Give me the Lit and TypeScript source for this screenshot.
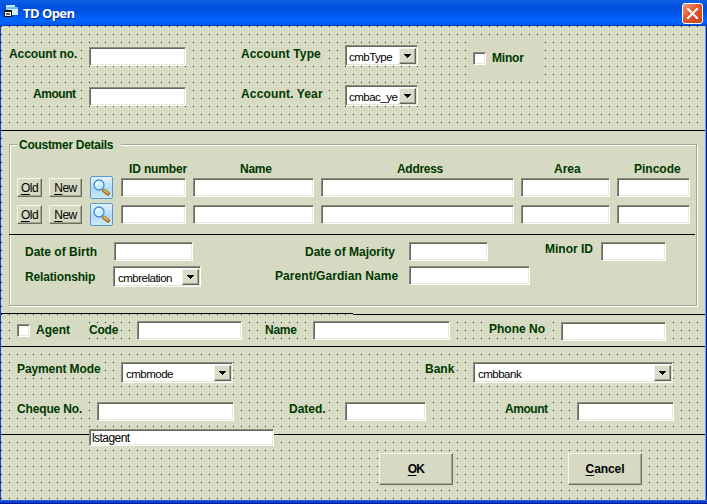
import { LitElement, html, svg, css } from "lit";
import { customElement, property } from "lit/decorators.js";

@customElement("combo-box")
class ComboBox extends LitElement {
  @property() value = "";
  static styles = css`
    :host { display: flex; flex: none; box-sizing: border-box; height: 20px; background: #fff;
      border: 1px solid; border-color: #8b8d7d #fff #fff #8b8d7d;
      box-shadow: inset 1px 1px #66675c, inset -1px -1px #dfe3d0; padding: 2px 1px 1px 4px; }
    .value { flex: 1; min-width: 0; white-space: nowrap; color: #000;
      font: 11.5px/18px "Liberation Sans", Arial, sans-serif; letter-spacing: -0.5px; }
    .drop { flex: none; width: 17px; box-sizing: border-box; background: #d9dcc8; border: 1px solid;
      border-color: #f1f3e6 #66675c #66675c #f1f3e6; box-shadow: inset -1px -1px #a2a491;
      display: flex; align-items: center; justify-content: center; }
    svg { display: block; }
  `;
  render() {
    return html`<span class="value">${this.value}</span>
      <span class="drop"><svg width="7" height="4" viewBox="0 0 7 4" shape-rendering="crispEdges"><path d="M0 0h7v1h-1v1h-1v1h-1v1h-1v-1h-1v-1h-1v-1h-1z"/></svg></span>`;
  }
}

@customElement("app-root")
class AppRoot extends LitElement {
  static styles = css`
    :host { display: block; width: 707px; height: 504px; overflow: hidden;
      font: bold 12px/15px "Liberation Sans", Arial, sans-serif; color: #003800; }
    * { box-sizing: border-box; }
    .window { display: flex; flex-direction: column; width: 707px; height: 504px; background: #0a3fd0; }
    .title { flex: none; height: 26px; display: flex; align-items: center; padding: 0 4px 0 4px;
      background: linear-gradient(#0a5fe8 0, #0b5ce2 2px, #0051de 5px, #0052e4 12px, #0061fb 18px, #0067ff 22px, #0058e8 24px, #0040bd 26px); }
    .title-text { flex: 1; margin-left: 4px; color: #fff; font: 700 13px/18px "Open Sans", "Noto Sans", sans-serif;
      letter-spacing: -0.55px; text-shadow: 1px 1px #0a2f8f; }
    .close { width: 21px; height: 21px; border: 1px solid #fff; border-radius: 3px; display: flex; align-items: center; justify-content: center;
      background: linear-gradient(135deg, #f09a80, #e2572f 45%, #c8401c); }
    svg { display: block; }
    .client { position: relative; flex: none; width: 704px; height: 474px; margin-left: 1px; display: flex; flex-direction: column;
      background: conic-gradient(from 270deg at 1px 1px, #1d1e18 90deg, transparent 0) 0 0 / 8px 8px,
        repeating-conic-gradient(#d3d8bf 0 25%, #dbe0ca 0 50%) 0 0 / 4px 4px; }
    .frame { flex: none; display: flex; height: 474px; }
    .right { width: 2px; background: linear-gradient(90deg, #6f9bea 1px, #001e9c 1px); }
    .bottom { height: 4px; background: linear-gradient(#2e5fd6 1px, #0a3fd8 1px 3px, #00189a 3px); }

    .section { flex: none; border-bottom: 1px solid #000; }
    .account { height: 105px; padding-top: 10px; display: flex; align-items: flex-start; }
    .account-grid { display: flex; flex-direction: column; padding-top: 9px; }
    .agent-section { height: 32px; padding-top: 6px; }
    .payment { height: 88px; padding-top: 15px; }
    .actions { height: 65px; padding-top: 18px; }
    .row { display: flex; align-items: flex-start; }
    .r40 { height: 40px; }

    .label { flex: none; height: 14px; white-space: nowrap; background: #d6dac3; }
    .field { flex: none; height: 19px; background: #fff; border: 1px solid; border-color: #8b8d7d #fff #fff #8b8d7d;
      box-shadow: inset 1px 1px #66675c, inset -1px -1px #e9ecdd; }
    .box { flex: none; width: 13px; height: 13px; background: #fff; border: 1px solid; border-color: #8b8d7d #fff #fff #8b8d7d;
      box-shadow: inset 1px 1px #66675c, inset -1px -1px #e9ecdd; }
    .btn { flex: none; height: 19px; border: 1px solid; border-color: #f6f8ec #6d6f60 #6d6f60 #f6f8ec; box-shadow: inset -1px -1px #a5a893;
      background: #d6dac3; color: #000; font: 12px/18px "Liberation Sans", Arial, sans-serif; letter-spacing: -0.5px; text-align: center; padding: 0; }
    u { text-decoration: underline; text-underline-offset: 2px; text-decoration-thickness: 1px; }

    .lbl-acc { width: 71px; margin-left: 8px; margin-top: 2px; letter-spacing: -0.1px; }
    .lbl-amt { width: 46px; margin-left: 32px; margin-top: 2px; letter-spacing: -0.45px; }
    .acc-no { width: 97px; margin-left: 9px; margin-top: 2px; }
    .amt { width: 97px; margin-left: 10px; margin-top: 2px; }
    .lbl-type { width: 82px; margin-left: 55px; margin-top: 2px; letter-spacing: 0.12px; }
    .lbl-year { width: 84px; margin-left: 55px; margin-top: 2px; letter-spacing: 0.15px; }
    .cmb-type { width: 73px; margin-left: 22px; height: 21px; }
    .cmb-year { width: 73px; margin-left: 20px; height: 21px; }
    .cmb-type, .cmb-year { padding-left: 3px; }
    .minor { width: 79px; height: 46px; margin-left: 48px; padding: 15px 0 0 7px; display: flex; background: #d6dac3; letter-spacing: -0.2px; }
    .minor .box { margin-top: 1px; margin-right: 6px; }

    .customer { flex: none; height: 182px; margin-left: 2px; padding: 13px 8px 6px 6px; background: #d6dac3; }
    .group { height: 162px; position: relative; border: 1px solid #a3a692; box-shadow: 1px 1px #fff, inset 1px 1px #fff; padding: 17px 0 0 0; }
    .legend { position: absolute; left: 7px; top: -7px; width: 104px; height: 14px; padding-left: 2px; background: #d6dac3; letter-spacing: -0.28px; white-space: nowrap; }
    .heads { height: 15px; }
    .h-id { width: 60px; margin-left: 119px; letter-spacing: -0.15px; }
    .h-name { width: 40px; margin-left: 51px; letter-spacing: -0.25px; }
    .h-addr { width: 50px; margin-left: 117px; letter-spacing: -0.3px; }
    .h-area { width: 30px; margin-left: 107px; }
    .h-pin { width: 52px; margin-left: 50px; }
    .cust-row { height: 27px; padding-left: 7px; }
    .old { width: 25px; margin-top: 1px; }
    .new { width: 33px; margin-left: 7px; margin-top: 1px; }
    .find { flex: none; width: 23px; height: 23px; margin: -1px 8px 0 8px; border: 1px solid #5f97cf; border-radius: 2px;
      background: linear-gradient(#e2f2fd, #b4daf6 55%, #c9e8fb); }
    .cust-row .field { margin-top: 1px; margin-right: 7px; }
    .c-id { width: 65px; }
    .c-name { width: 121px; }
    .c-addr { width: 193px; }
    .c-area { width: 89px; }
    .c-pin { width: 73px; }
    .divider { height: 1px; width: 686px; margin: 3px 0 7px -1px; background: #000; }
    .dates { height: 24px; }
    .l-dob { width: 76px; margin-left: 15px; margin-top: 3px; }
    .f-dob { width: 79px; margin-left: 13px; }
    .l-maj { width: 95px; margin-left: 112px; margin-top: 3px; }
    .f-maj { width: 79px; margin-left: 9px; }
    .l-mid { width: 50px; margin-left: 57px; }
    .f-mid { width: 65px; margin-left: 6px; }
    .l-rel { width: 76px; margin-left: 15px; margin-top: 4px; letter-spacing: -0.15px; }
    .cmb-rel { width: 88px; margin-left: 12px; height: 21px; }
    .l-par { width: 125px; margin-left: 74px; margin-top: 3px; letter-spacing: 0.06px; }
    .f-par { width: 121px; margin-left: 9px; }

    .split { flex: none; height: 2px; display: flex; }
    .split-a { width: 352px; border-top: 1px solid #000; }
    .split-b { flex: 1; background: #d6dac3; border-bottom: 1px solid #000; }

    .agent { display: flex; width: 72px; height: 19px; margin-left: 15px; padding: 3px 0 0 1px; background: #d6dac3; }
    .agent .label { margin: -1px 0 0 6px; }
    .l-code { width: 31px; margin-left: 1px; margin-top: 2px; letter-spacing: -0.2px; }
    .f-code { width: 105px; margin-left: 17px; }
    .l-name { width: 36px; margin-left: 23px; margin-top: 2px; letter-spacing: -0.25px; }
    .f-name { width: 137px; margin-left: 12px; }
    .l-phone { width: 60px; margin-left: 39px; margin-top: 1px; }
    .f-phone { width: 105px; margin-left: 12px; margin-top: 1px; }

    .l-mode { width: 86px; margin-left: 16px; letter-spacing: -0.1px; }
    .cmb-mode { width: 112px; margin-left: 18px; height: 21px; }
    .l-bank { width: 32px; margin-left: 192px; }
    .cmb-bank { width: 200px; margin-left: 16px; height: 21px; }
    .l-chq { width: 68px; margin-left: 16px; letter-spacing: -0.15px; }
    .f-chq { width: 137px; margin-left: 12px; }
    .l-dated { width: 40px; margin-left: 55px; }
    .f-dated { width: 81px; margin-left: 16px; }
    .l-amt2 { width: 44px; margin-left: 79px; letter-spacing: -0.45px; }
    .f-amt2 { width: 97px; margin-left: 28px; }
    .list { position: absolute; left: 88px; top: 403px; width: 185px; height: 17px; padding-left: 2px; background: #fff; border: 1px solid;
      border-color: #8b8d7d #fff #fff #8b8d7d; box-shadow: inset 1px 1px #66675c, inset -1px -1px #e9ecdd;
      color: #000; font: 12px/17px "Liberation Sans", Arial, sans-serif; letter-spacing: -0.55px; }
    .big { width: 74px; height: 32px; font-weight: bold; line-height: 30px; letter-spacing: -0.1px; }
    .ok { margin-left: 378px; letter-spacing: -0.8px; }
    .cancel { margin-left: 115px; }
  `;

  private lens() {
    return svg`<svg width="21" height="21" viewBox="0 0 21 21">
      <path d="M11.5 12.5 L13 14" stroke="#6d86a0" stroke-width="2"/>
      <path d="M13 13.500 L17 16.600" stroke="#8a6420" stroke-width="4" stroke-linecap="round"/>
      <path d="M13 13.200 L16.8 16.200" stroke="#e0b055" stroke-width="2.2" stroke-linecap="round"/>
      <circle cx="8" cy="8" r="5" fill="#c9f1fd" stroke="#4a8bc9" stroke-width="1.3"/>
      <path d="M5 8a3 3 0 0 1 3-3" fill="none" stroke="#fff" stroke-width="1.4"/>
    </svg>`;
  }

  private customerRow() {
    return html`<div class="row cust-row">
      <button class="btn old"><u>O</u>ld</button>
      <button class="btn new"><u>N</u>ew</button>
      <span class="find">${this.lens()}</span>
      <span class="field c-id"></span><span class="field c-name"></span><span class="field c-addr"></span><span class="field c-area"></span><span class="field c-pin"></span>
    </div>`;
  }

  render() {
    return html`<div class="window">
      <div class="title">
        <svg width="15" height="16" viewBox="0 0 15 16">
          <path d="M2 0h9v8h-9z" fill="#7fd0f4"/><path d="M2 0h9v2h-9z" fill="#c4e8fa"/>
          <path d="M5 2h9v8h-9z" fill="#d4eef8"/><path d="M5 2h9v2h-9z" fill="#6cb9ea"/>
          <path d="M.5 5.500h7v6h-7z" fill="#fff" stroke="#111"/><path d="M0 5h8v2h-8z" fill="#111"/>
          <path d="M2 8h4v2h-4z" fill="#666"/>
        </svg>
        <span class="title-text">TD Open</span>
        <span class="close"><svg width="13" height="13" viewBox="0 0 13 13"><path d="M2 2l9 9M11 2l-9 9" stroke="#fff" stroke-width="2" stroke-linecap="square"/></svg></span>
      </div>
      <div class="frame">
        <div class="client">
          <div class="section account">
            <div class="account-grid">
              <div class="row r40">
                <span class="label lbl-acc">Account no.</span><span class="field acc-no"></span>
                <span class="label lbl-type">Account Type</span><combo-box class="cmb-type" value="cmbType"></combo-box>
              </div>
              <div class="row r40">
                <span class="label lbl-amt">Amount</span><span class="field amt"></span>
                <span class="label lbl-year">Account. Year</span><combo-box class="cmb-year" value="cmbac_ye"></combo-box>
              </div>
            </div>
            <div class="minor"><span class="box"></span><span class="label">Minor</span></div>
          </div>

          <div class="customer">
            <div class="group">
              <span class="legend">Coustmer Details</span>
              <div class="row heads">
                <span class="label h-id">ID number</span><span class="label h-name">Name</span><span class="label h-addr">Address</span><span class="label h-area">Area</span><span class="label h-pin">Pincode</span>
              </div>
              ${this.customerRow()}${this.customerRow()}
              <div class="divider"></div>
              <div class="row dates">
                <span class="label l-dob">Date of Birth</span><span class="field f-dob"></span>
                <span class="label l-maj">Date of Majority</span><span class="field f-maj"></span>
                <span class="label l-mid">Minor ID</span><span class="field f-mid"></span>
              </div>
              <div class="row">
                <span class="label l-rel">Relationship</span><combo-box class="cmb-rel" value="cmbrelation"></combo-box>
                <span class="label l-par">Parent/Gardian Name</span><span class="field f-par"></span>
              </div>
            </div>
          </div>
          <div class="split"><span class="split-a"></span><span class="split-b"></span></div>

          <div class="section agent-section row">
            <div class="agent"><span class="box"></span><span class="label">Agent</span></div>
            <span class="label l-code">Code</span><span class="field f-code"></span>
            <span class="label l-name">Name</span><span class="field f-name"></span>
            <span class="label l-phone">Phone No</span><span class="field f-phone"></span>
          </div>

          <div class="section payment">
            <div class="row r40">
              <span class="label l-mode">Payment Mode</span><combo-box class="cmb-mode" value="cmbmode"></combo-box>
              <span class="label l-bank">Bank</span><combo-box class="cmb-bank" value="cmbbank"></combo-box>
            </div>
            <div class="row">
              <span class="label l-chq">Cheque No.</span><span class="field f-chq"></span>
              <span class="label l-dated">Dated.</span><span class="field f-dated"></span>
              <span class="label l-amt2">Amount</span><span class="field f-amt2"></span>
            </div>
          </div>

          <div class="actions row">
            <button class="btn big ok"><u>O</u>K</button>
            <button class="btn big cancel"><u>C</u>ancel</button>
          </div>
          <div class="list">lstagent</div>
        </div>
        <div class="right"></div>
      </div>
      <div class="bottom"></div>
    </div>`;
  }
}
